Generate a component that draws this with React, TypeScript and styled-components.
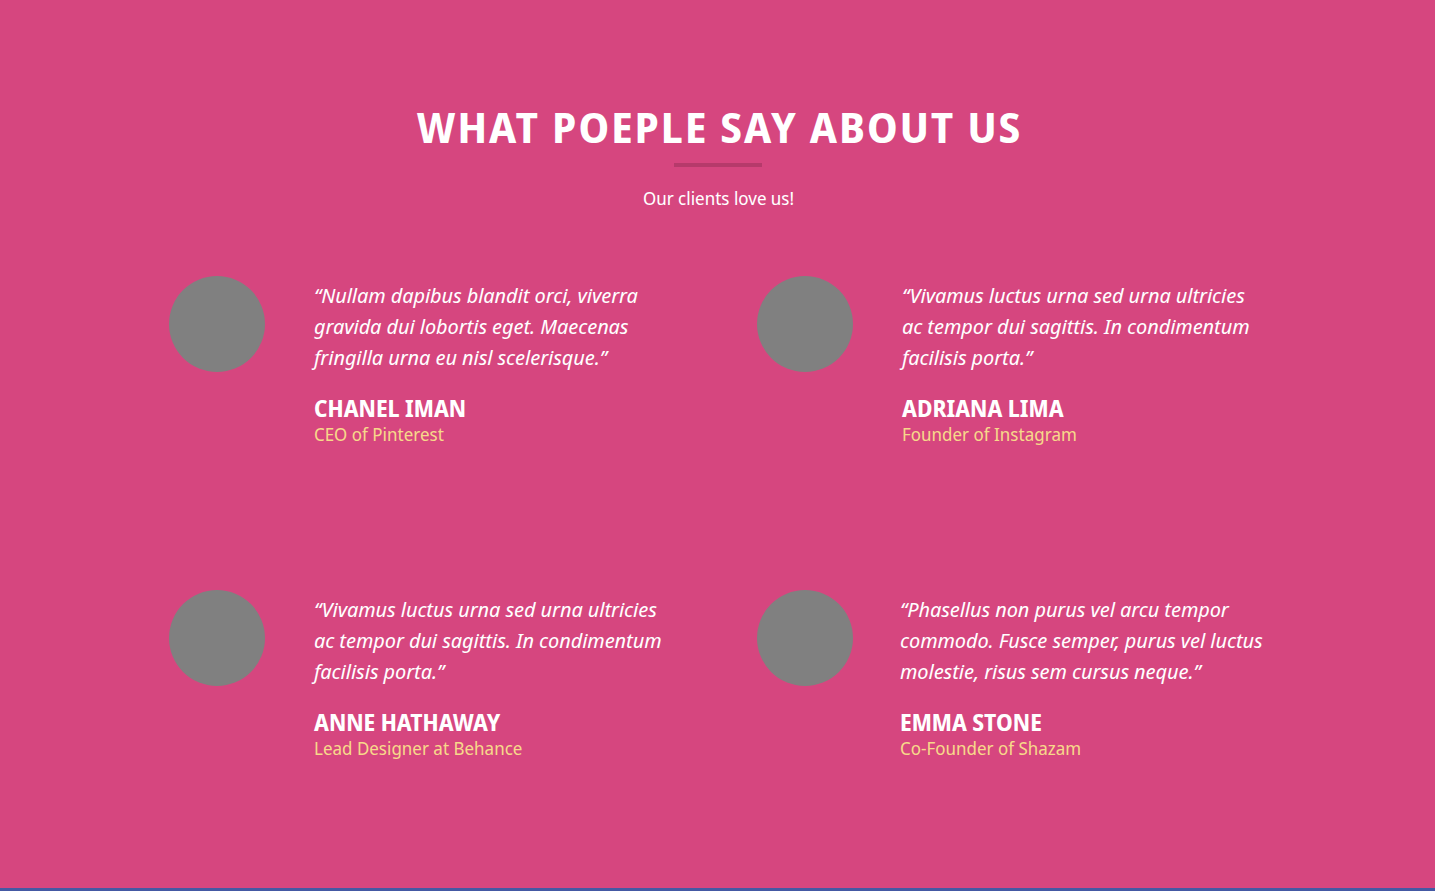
import React from "react";
import styled, { createGlobalStyle } from "styled-components";

const GlobalStyle = createGlobalStyle`
  html, body { margin: 0; padding: 0; }
  body {
    background: #d6467f;
    font-family: "Noto Sans Display", "Noto Sans", "Open Sans", sans-serif;
    color: #ffffff;
  }
`;

const Section = styled.section`
  box-sizing: border-box;
  height: 888px;
  padding-top: 103px;
  background: #d6467f;
  display: flex;
  flex-direction: column;
  align-items: center;
`;

const BottomStrip = styled.div`
  height: 3px;
  background: #4459a3;
`;

const Title = styled.h2`
  margin: 0;
  font-size: 41px;
  line-height: 48px;
  font-weight: 700;
  letter-spacing: 2px;
  padding-left: 4px;
  text-transform: uppercase;
  color: #ffffff;
`;

const TitleBar = styled.div`
  width: 88px;
  height: 4px;
  margin-top: 12px;
  background: #b63a6b;
`;

const Subtitle = styled.p`
  margin: 19px 0 0;
  font-size: 18px;
  line-height: 24px;
  padding-left: 2px;
`;

const Grid = styled.div`
  align-self: stretch;
  margin-top: 66px;
  padding-left: 169px;
  display: grid;
  grid-template-columns: 588px 588px;
  row-gap: 145px;
`;

const Card = styled.article`
  display: flex;
  align-items: flex-start;
  gap: 49px;
`;

const Avatar = styled.div`
  flex: none;
  width: 96px;
  height: 96px;
  border-radius: 50%;
  background: #808080;
`;

const Body = styled.div<{ $shift?: number }>`
  padding-top: 4px;
  margin-left: ${(p) => p.$shift ?? 0}px;
`;

const Quote = styled.p`
  margin: 0;
  font-size: 20.8px;
  line-height: 31px;
  font-style: italic;
  white-space: nowrap;
`;

const Name = styled.h4`
  margin: 23px 0 0;
  font-size: 22.4px;
  line-height: 26px;
  font-weight: 700;
  text-transform: uppercase;
`;

const Role = styled.div`
  margin-top: 1px;
  font-size: 18px;
  line-height: 22px;
  color: #f7d88a;
`;

type T = { lines: string[]; name: string; role: string; shift?: number };

const testimonials: T[] = [
  {
    lines: ["“Nullam dapibus blandit orci, viverra", "gravida dui lobortis eget. Maecenas", "fringilla urna eu nisl scelerisque.”"],
    name: "Chanel Iman",
    role: "CEO of Pinterest",
  },
  {
    lines: ["“Vivamus luctus urna sed urna ultricies", "ac tempor dui sagittis. In condimentum", "facilisis porta.”"],
    name: "Adriana Lima",
    role: "Founder of Instagram",
  },
  {
    lines: ["“Vivamus luctus urna sed urna ultricies", "ac tempor dui sagittis. In condimentum", "facilisis porta.”"],
    name: "Anne Hathaway",
    role: "Lead Designer at Behance",
  },
  {
    lines: ["“Phasellus non purus vel arcu tempor", "commodo. Fusce semper, purus vel luctus", "molestie, risus sem cursus neque.”"],
    name: "Emma Stone",
    role: "Co-Founder of Shazam",
    shift: -2,
  },
];

export default function App() {
  return (
    <>
      <GlobalStyle />
      <Section>
        <Title>What poeple say about us</Title>
        <TitleBar />
        <Subtitle>Our clients love us!</Subtitle>
        <Grid>
          {testimonials.map((t, i) => (
            <Card key={i}>
              <Avatar />
              <Body $shift={t.shift}>
                <Quote>
                  {t.lines.map((l, j) => (
                    <React.Fragment key={j}>
                      {l}
                      {j < t.lines.length - 1 && <br />}
                    </React.Fragment>
                  ))}
                </Quote>
                <Name>{t.name}</Name>
                <Role>{t.role}</Role>
              </Body>
            </Card>
          ))}
        </Grid>
      </Section>
      <BottomStrip />
    </>
  );
}
